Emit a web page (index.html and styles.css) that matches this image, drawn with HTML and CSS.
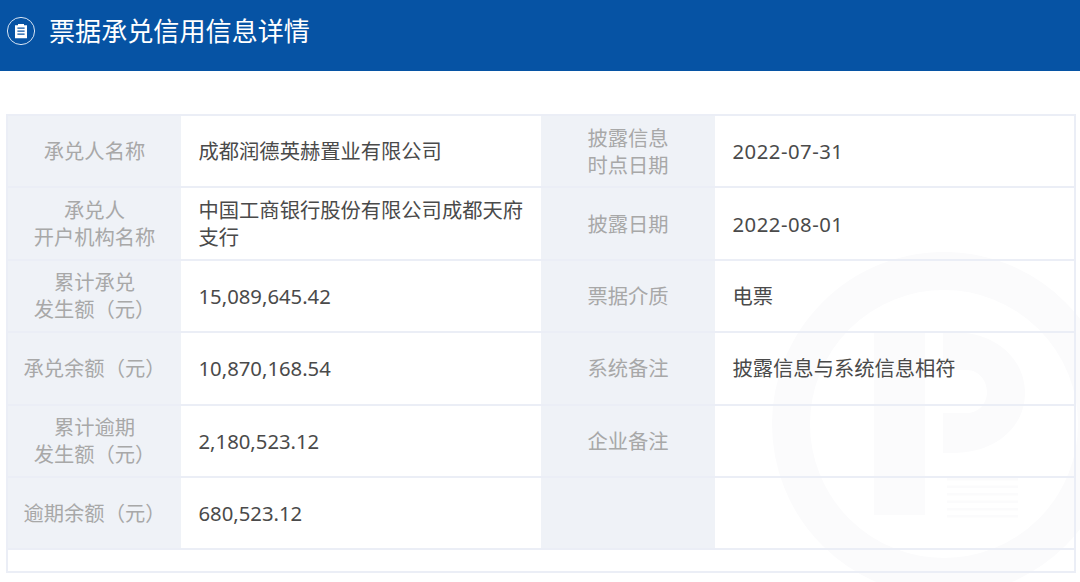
FILE: index.html
```html
<!DOCTYPE html>
<html lang="zh">
<head>
<meta charset="utf-8">
<title>票据承兑信用信息详情</title>
<link rel="stylesheet" href="styles.css">
</head>
<body>
<header class="bar">
  <svg class="bar-icon" viewBox="0 0 30 30" aria-hidden="true">
    <circle cx="15" cy="15" r="13.6" fill="none" stroke="#d5e3f3" stroke-width="1"/>
    <path d="M9 9.2h3V8h6v1.2h3v13h-12z" fill="#fff"/>
    <path d="M11.4 12.2h7.2M11.4 15.2h7.2M11.4 18.2h7.2" stroke="#0b55a5" stroke-width="1.2"/>
  </svg>
  <h1 class="bar-title">票据承兑信用信息详情</h1>
</header>
<main class="content">
  <svg class="mark" viewBox="0 0 344 344" aria-hidden="true">
    <circle cx="172" cy="172" r="153" fill="none" stroke="#fbfbfc" stroke-width="38"/>
    <path d="M102 80h51v183h-51z" fill="#fbfbfc"/>
    <path d="M171 80h10c44 0 72 28 72 61s-28 60-72 60h-10v-40h24c12 0 20-10 20-21s-8-22-20-22h-24z" fill="#fbfbfc"/>
    <path d="M175 226h71v2.500h-71zM175 233.500h71v2.500h-71zM175 241h71v2.500h-71zM175 248.500h71v2.500h-71zM175 256h71v2.500h-71zM175 263h71v2.500h-71z" fill="#fbfbfc"/>
  </svg>
  <div class="sheet">
    <div class="row">
      <div class="label">承兑人名称</div><div class="value">成都润德英赫置业有限公司</div>
      <div class="label">披露信息<br>时点日期</div><div class="value date">2022-07-31</div>
    </div>
    <div class="row">
      <div class="label">承兑人<br>开户机构名称</div><div class="value">中国工商银行股份有限公司成都天府支行</div>
      <div class="label">披露日期</div><div class="value date">2022-08-01</div>
    </div>
    <div class="row">
      <div class="label">累计承兑<br>发生额（元）</div><div class="value">15,089,645.42</div>
      <div class="label">票据介质</div><div class="value">电票</div>
    </div>
    <div class="row">
      <div class="label">承兑余额（元）</div><div class="value">10,870,168.54</div>
      <div class="label">系统备注</div><div class="value">披露信息与系统信息相符</div>
    </div>
    <div class="row">
      <div class="label">累计逾期<br>发生额（元）</div><div class="value">2,180,523.12</div>
      <div class="label">企业备注</div><div class="value"></div>
    </div>
    <div class="row">
      <div class="label">逾期余额（元）</div><div class="value">680,523.12</div>
      <div class="label"></div><div class="value"></div>
    </div>
    <div class="row-tail"></div>
  </div>
</main>
</body>
</html>
```

FILE: styles.css
```css
* { box-sizing: border-box; }
html, body { margin: 0; height: 100%; overflow: hidden; background: #fff; }
body { font-family: "Noto Sans", "Noto Sans CJK SC", sans-serif; }

.bar {
  height: 70.5px;
  background: #0653a4;
  display: flex;
  align-items: center;
  gap: 13px;
  padding: 0 0 9px 6px;
}
.bar-icon { width: 30px; height: 30px; flex: none; }
.bar-title { margin: 0; font-size: 26.1px; line-height: 36px; font-weight: 400; color: #fff; }

.content { position: relative; padding: 43.5px 4px 0 6px; }
.sheet {
  position: relative;
  z-index: 1;
  border: 2px solid #ebeef6;
  font-size: 20.3px;
  line-height: 27px;
}
.row {
  display: grid;
  grid-template-columns: 173px 360px 174px 1fr;
  height: 72.4px;
  border-bottom: 2px solid #ebeef6;
}
.row-tail { height: 21px; }
.label {
  background: #eff2f7;
  color: #a8a8a8;
  display: flex;
  align-items: center;
  justify-content: center;
  text-align: center;
  padding-top: 1px;
}
.value {
  color: #4a4a4a;
  display: flex;
  align-items: center;
  padding: 1px 12px 0 17.5px;
}
.date { letter-spacing: .5px; }
.mark {
  position: absolute;
  left: 772px;
  top: 181.5px;
  width: 344px;
  height: 344px;
  pointer-events: none;
}
```
